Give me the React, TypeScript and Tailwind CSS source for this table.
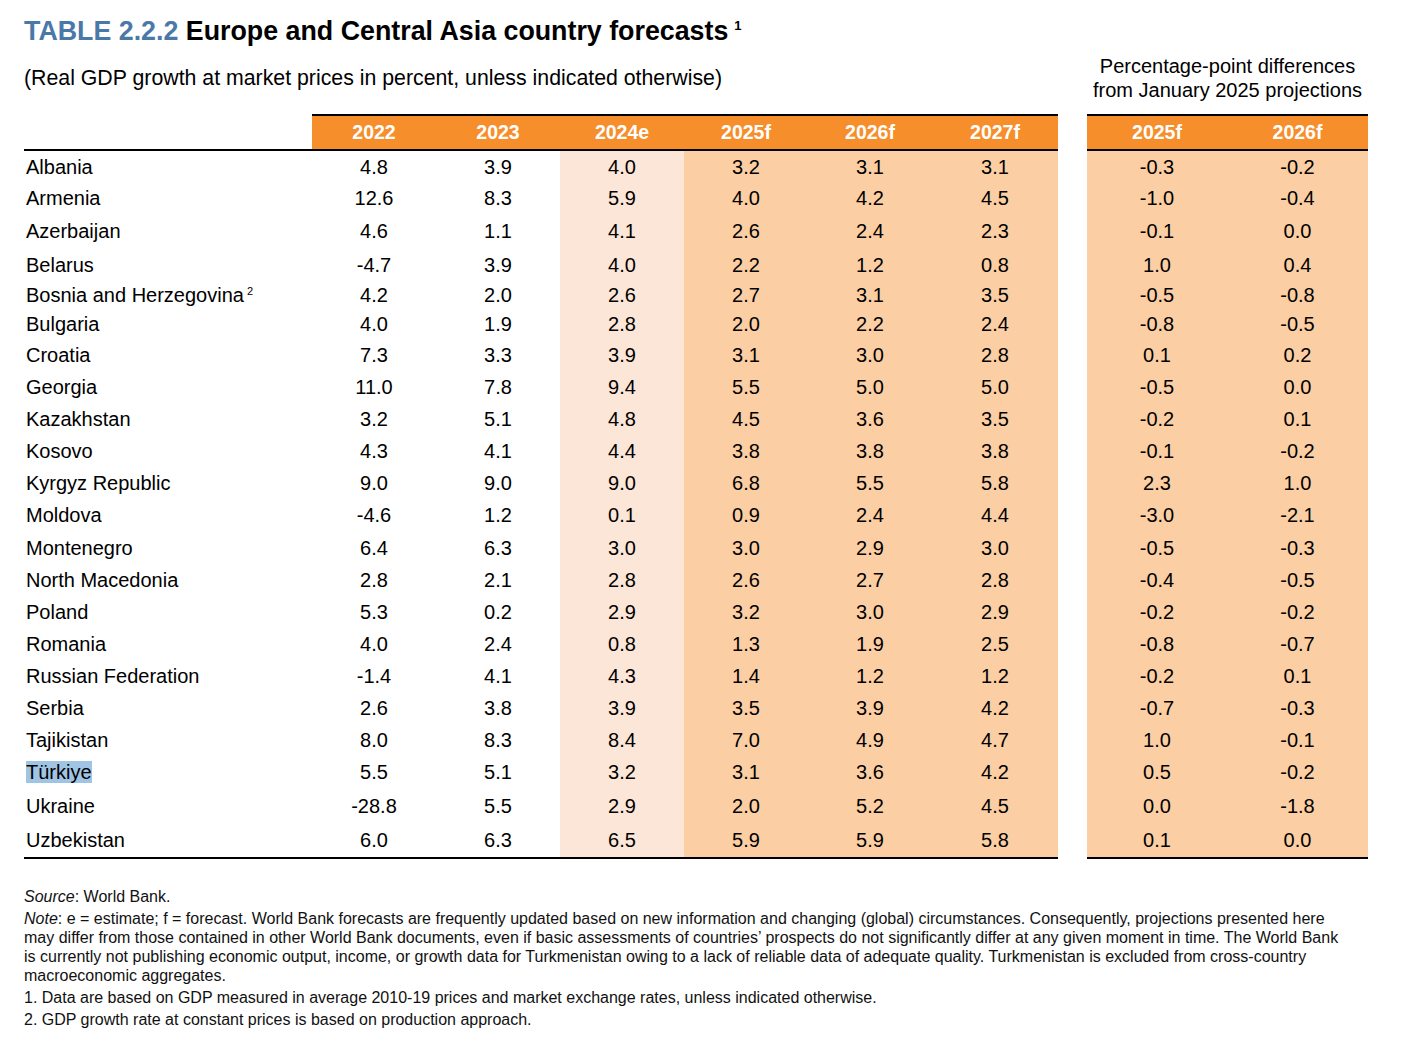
import React from 'react';

type Row = {
  name: string;
  sup?: string;
  h: string;
  vals: string[];
  diff: string[];
  highlight?: boolean;
};

const rows: Row[] = [
  { name: 'Albania', h: 'h-[31px]', vals: ['4.8', '3.9', '4.0', '3.2', '3.1', '3.1'], diff: ['-0.3', '-0.2'] },
  { name: 'Armenia', h: 'h-[32px]', vals: ['12.6', '8.3', '5.9', '4.0', '4.2', '4.5'], diff: ['-1.0', '-0.4'] },
  { name: 'Azerbaijan', h: 'h-[34px]', vals: ['4.6', '1.1', '4.1', '2.6', '2.4', '2.3'], diff: ['-0.1', '0.0'] },
  { name: 'Belarus', h: 'h-[33px]', vals: ['-4.7', '3.9', '4.0', '2.2', '1.2', '0.8'], diff: ['1.0', '0.4'] },
  { name: 'Bosnia and Herzegovina', sup: '2', h: 'h-[28px]', vals: ['4.2', '2.0', '2.6', '2.7', '3.1', '3.5'], diff: ['-0.5', '-0.8'] },
  { name: 'Bulgaria', h: 'h-[30px]', vals: ['4.0', '1.9', '2.8', '2.0', '2.2', '2.4'], diff: ['-0.8', '-0.5'] },
  { name: 'Croatia', h: 'h-[32px]', vals: ['7.3', '3.3', '3.9', '3.1', '3.0', '2.8'], diff: ['0.1', '0.2'] },
  { name: 'Georgia', h: 'h-[32px]', vals: ['11.0', '7.8', '9.4', '5.5', '5.0', '5.0'], diff: ['-0.5', '0.0'] },
  { name: 'Kazakhstan', h: 'h-[32px]', vals: ['3.2', '5.1', '4.8', '4.5', '3.6', '3.5'], diff: ['-0.2', '0.1'] },
  { name: 'Kosovo', h: 'h-[32px]', vals: ['4.3', '4.1', '4.4', '3.8', '3.8', '3.8'], diff: ['-0.1', '-0.2'] },
  { name: 'Kyrgyz Republic', h: 'h-[32px]', vals: ['9.0', '9.0', '9.0', '6.8', '5.5', '5.8'], diff: ['2.3', '1.0'] },
  { name: 'Moldova', h: 'h-[32px]', vals: ['-4.6', '1.2', '0.1', '0.9', '2.4', '4.4'], diff: ['-3.0', '-2.1'] },
  { name: 'Montenegro', h: 'h-[33px]', vals: ['6.4', '6.3', '3.0', '3.0', '2.9', '3.0'], diff: ['-0.5', '-0.3'] },
  { name: 'North Macedonia', h: 'h-[32px]', vals: ['2.8', '2.1', '2.8', '2.6', '2.7', '2.8'], diff: ['-0.4', '-0.5'] },
  { name: 'Poland', h: 'h-[32px]', vals: ['5.3', '0.2', '2.9', '3.2', '3.0', '2.9'], diff: ['-0.2', '-0.2'] },
  { name: 'Romania', h: 'h-[32px]', vals: ['4.0', '2.4', '0.8', '1.3', '1.9', '2.5'], diff: ['-0.8', '-0.7'] },
  { name: 'Russian Federation', h: 'h-[32px]', vals: ['-1.4', '4.1', '4.3', '1.4', '1.2', '1.2'], diff: ['-0.2', '0.1'] },
  { name: 'Serbia', h: 'h-[32px]', vals: ['2.6', '3.8', '3.9', '3.5', '3.9', '4.2'], diff: ['-0.7', '-0.3'] },
  { name: 'Tajikistan', h: 'h-[32px]', vals: ['8.0', '8.3', '8.4', '7.0', '4.9', '4.7'], diff: ['1.0', '-0.1'] },
  { name: 'Türkiye', highlight: true, h: 'h-[32px]', vals: ['5.5', '5.1', '3.2', '3.1', '3.6', '4.2'], diff: ['0.5', '-0.2'] },
  { name: 'Ukraine', h: 'h-[35px]', vals: ['-28.8', '5.5', '2.9', '2.0', '5.2', '4.5'], diff: ['0.0', '-1.8'] },
  { name: 'Uzbekistan', h: 'h-[34px]', vals: ['6.0', '6.3', '6.5', '5.9', '5.9', '5.8'], diff: ['0.1', '0.0'] },
];

const years = ['2022', '2023', '2024e', '2025f', '2026f', '2027f'];
const colW = ['w-[124px]', 'w-[124px]', 'w-[124px]', 'w-[124px]', 'w-[124px]', 'w-[126px]'];
const colBg = ['', '', 'bg-[#fce6d8]', 'bg-[#fbcea4]', 'bg-[#fbcea4]', 'bg-[#fbcea4]'];

const App = () => {
  return (
    <div className="w-[1422px] h-[1056px] bg-white text-black font-['Liberation_Sans',Arial,sans-serif]">
      <div className="pl-6 pt-[14px]">
        <h1 className="text-[26.8px] leading-[34px] font-bold">
          <span className="text-[#4a79a8]">TABLE 2.2.2</span> Europe and Central Asia country forecasts
          <span className="inline-block align-top text-[13px] leading-[13px] ml-[6px] mt-[5px]">1</span>
        </h1>
      </div>

      <div className="flex pl-6 pt-[2px]">
        {/* main table */}
        <div className="w-[1034px]">
          <div className="h-[64px] flex items-center">
            <p className="text-[21.3px] leading-[24px] -mt-[8px]">
              (Real GDP growth at market prices in percent, unless indicated otherwise)
            </p>
          </div>
          <div className="flex border-b-2 border-black">
            <div className="w-[288px]" />
            <div className="flex border-t-2 border-black bg-[#f68e2b]">
              {years.map((y, i) => (
                <div key={y} className={`${colW[i]} h-[33px] pt-[1px] flex items-center justify-center text-white font-bold text-[19.5px]`}>
                  {y}
                </div>
              ))}
            </div>
          </div>
          <div className="border-b-2 border-black">
            {rows.map((r) => (
              <div key={r.name} className={`flex ${r.h} text-[20px]`}>
                <div className="w-[288px] pl-[2px] flex items-center">
                  <span className={r.highlight ? 'bg-[#9fc4e4] leading-[22px]' : ''}>{r.name}</span>
                  {r.sup && <span className="text-[11px] ml-[3px] -mt-[8px]">{r.sup}</span>}
                </div>
                {r.vals.map((v, i) => (
                  <div key={i} className={`${colW[i]} ${colBg[i]} flex items-center justify-center`}>
                    {v}
                  </div>
                ))}
              </div>
            ))}
          </div>
        </div>

        {/* differences table */}
        <div className="w-[281px] ml-[29px]">
          <div className="h-[64px] flex flex-col justify-center items-center text-[20px] leading-[24px] pb-[8px]">
            <span>Percentage-point differences</span>
            <span>from January 2025 projections</span>
          </div>
          <div className="border-t-2 border-b-2 border-black bg-[#f68e2b] flex">
            <div className="w-[140px] h-[33px] pt-[1px] flex items-center justify-center text-white font-bold text-[19.5px]">2025f</div>
            <div className="w-[141px] h-[33px] pt-[1px] flex items-center justify-center text-white font-bold text-[19.5px]">2026f</div>
          </div>
          <div className="border-b-2 border-black bg-[#fbcea4]">
            {rows.map((r) => (
              <div key={r.name} className={`flex ${r.h} text-[20px]`}>
                <div className="w-[140px] flex items-center justify-center">{r.diff[0]}</div>
                <div className="w-[141px] flex items-center justify-center">{r.diff[1]}</div>
              </div>
            ))}
          </div>
        </div>
      </div>

      <div className="pl-6 pt-[28px] text-[16px] leading-[19px] text-[#111]">
        <p>
          <i>Source</i>: World Bank.
        </p>
        <p className="mt-[3px]">
          <i>Note</i>: e = estimate; f = forecast. World Bank forecasts are frequently updated based on new information and changing (global) circumstances. Consequently, projections presented here
          <br />
          may differ from those contained in other World Bank documents, even if basic assessments of countries’ prospects do not significantly differ at any given moment in time. The World Bank
          <br />
          is currently not publishing economic output, income, or growth data for Turkmenistan owing to a lack of reliable data of adequate quality. Turkmenistan is excluded from cross-country
          <br />
          macroeconomic aggregates.
        </p>
        <p className="mt-[3px]">1. Data are based on GDP measured in average 2010-19 prices and market exchange rates, unless indicated otherwise.</p>
        <p className="mt-[3px]">2. GDP growth rate at constant prices is based on production approach.</p>
      </div>
    </div>
  );
};

export default App;
